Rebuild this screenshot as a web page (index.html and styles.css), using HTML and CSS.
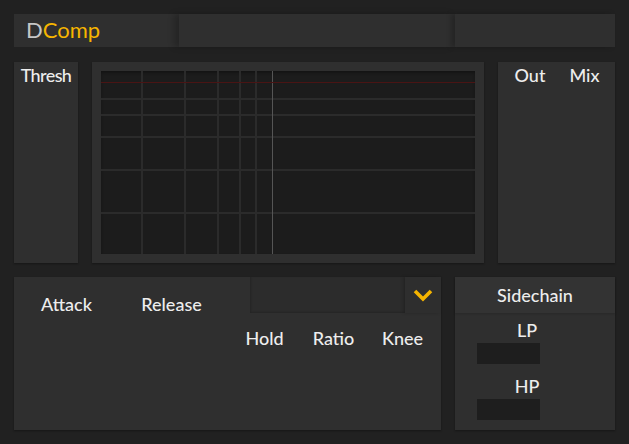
FILE: index.html
```html
<!DOCTYPE html>
<html>
<head>
<meta charset="utf-8">
<link rel="stylesheet" href="styles.css">
</head>
<body>
<div class="app">
  <header class="topbar">
    <div class="seg seg-title"><span class="logo-d">D</span><span class="logo-comp">Comp</span></div>
    <div class="seg seg-mid"></div>
    <div class="seg seg-right"></div>
  </header>

  <section class="middle">
    <div class="panel thresh"><span class="label label-tight">Thresh</span></div>
    <div class="panel graph">
      <div class="graph-inner">
        <svg class="grid" width="374" height="183" viewBox="0 0 374 183">
          <rect x="0" y="27" width="374" height="2" fill="#2b2b2b"/>
          <rect x="0" y="43" width="374" height="2" fill="#2b2b2b"/>
          <rect x="0" y="65" width="374" height="2" fill="#2b2b2b"/>
          <rect x="0" y="98" width="374" height="2" fill="#2b2b2b"/>
          <rect x="0" y="141" width="374" height="2" fill="#2b2b2b"/>
          <rect x="40" y="0" width="2" height="183" fill="#2b2b2b"/>
          <rect x="83" y="0" width="2" height="183" fill="#2b2b2b"/>
          <rect x="116" y="0" width="2" height="183" fill="#2b2b2b"/>
          <rect x="138" y="0" width="2" height="183" fill="#2b2b2b"/>
          <rect x="154" y="0" width="2" height="183" fill="#2b2b2b"/>
          <rect x="171" y="0" width="1" height="183" fill="#555555"/>
          <rect x="0" y="11" width="374" height="1" fill="#4a1414"/>
        </svg>
      </div>
    </div>
    <div class="panel outmix">
      <span class="label">Out</span>
      <span class="label">Mix</span>
    </div>
  </section>

  <section class="bottom">
    <div class="panel envelope">
      <div class="env-left">
        <span class="label env-label">Attack</span>
        <span class="label env-label">Release</span>
      </div>
      <div class="env-right">
        <div class="dropdown">
          <div class="dropdown-field"></div>
          <div class="dropdown-btn">
            <svg width="20" height="13" viewBox="0 0 20 13">
              <path d="M2 2 L10 10 L18 2" fill="none" stroke="#f5b400" stroke-width="3.6" stroke-linecap="butt" stroke-linejoin="miter"/>
            </svg>
          </div>
        </div>
        <div class="env-params">
          <span class="label param">Hold</span>
          <span class="label param">Ratio</span>
          <span class="label param">Knee</span>
        </div>
      </div>
    </div>
    <div class="panel sidechain">
      <div class="sc-header"><span class="label">Sidechain</span></div>
      <div class="sc-body">
        <span class="label sc-label">LP</span>
        <div class="sc-box"></div>
        <span class="label sc-label sc-label-hp">HP</span>
        <div class="sc-box"></div>
      </div>
    </div>
  </section>
</div>
</body>
</html>
```
FILE: styles.css
```css
* { box-sizing: border-box; }

html, body {
  margin: 0;
  padding: 0;
  background: #212121;
}

body {
  font-family: Lato, "Liberation Sans", sans-serif;
  color: #ededed;
}

.app {
  width: 629px;
  height: 444px;
  padding: 14px 14px 0 14px;
  display: flex;
  flex-direction: column;
}

.label {
  font-size: 18px;
  line-height: 20px;
  font-weight: 500;
  color: #ededed;
  white-space: nowrap;
}

.label-tight {
  letter-spacing: -0.6px;
}

/* top bar */
.topbar {
  display: flex;
  height: 33px;
}

.seg {
  background: #2f2f2f;
  height: 33px;
}

.seg-title {
  width: 165px;
  padding-left: 12px;
  display: flex;
  align-items: center;
  font-size: 22px;
  line-height: 33px;
  padding-bottom: 2px;
}

.logo-d { color: #c6c6c6; }
.logo-comp { color: #f6b500; }

.seg-mid {
  width: 276px;
  box-shadow: -5px 0 6px rgba(0, 0, 0, 0.22);
  z-index: 1;
}

.seg-right {
  width: 160px;
  box-shadow: -4px 0 5px rgba(0, 0, 0, 0.22);
  z-index: 2;
}

.panel {
  background: #2f2f2f;
  box-shadow: 0 1px 2px rgba(0, 0, 0, 0.35);
}

/* middle row */
.middle {
  display: flex;
  gap: 14px;
  margin-top: 15px;
  height: 201px;
}

.thresh {
  width: 64px;
  padding-top: 3px;
  text-align: center;
}

.graph {
  width: 392px;
  padding: 9px;
}

.graph-inner {
  width: 374px;
  height: 183px;
  background: #1c1c1c;
  box-shadow: inset 0 2px 3px rgba(0, 0, 0, 0.3);
}

.grid { display: block; }

.outmix {
  width: 117px;
  display: grid;
  grid-template-columns: 64px 45px;
  align-content: start;
  padding-top: 3px;
  text-align: center;
}

/* bottom row */
.bottom {
  display: flex;
  gap: 14px;
  margin-top: 14px;
  height: 153px;
}

.envelope {
  width: 427px;
  display: flex;
}

.env-left {
  display: flex;
  width: 210px;
  padding-top: 17px;
  align-items: flex-start;
}

.env-label {
  width: 105px;
  text-align: center;
}

.env-right {
  flex: 1;
  display: flex;
  flex-direction: column;
}

.dropdown {
  display: flex;
  margin-left: 26px;
  height: 36px;
}

.dropdown-field {
  flex: 1;
  background: #2c2c2c;
  box-shadow: inset 1px -1px 2px rgba(0, 0, 0, 0.18);
}

.dropdown-btn {
  width: 36px;
  display: flex;
  align-items: center;
  justify-content: center;
  background: #2e2e2e;
  box-shadow: -2px 0 3px rgba(0, 0, 0, 0.18);
}

.env-params {
  display: flex;
  padding-left: 6px;
  margin-top: 15px;
}

.param {
  width: 69px;
  text-align: center;
}

.sidechain {
  width: 160px;
  display: flex;
  flex-direction: column;
}

.sc-header {
  height: 36px;
  background: #333333;
  text-align: center;
  padding-top: 8px;
  box-shadow: 0 1px 2px rgba(0, 0, 0, 0.15);
}

.sc-body {
  display: flex;
  flex-direction: column;
  align-items: flex-start;
  padding-left: 22px;
  padding-top: 7px;
}

.sc-label {
  width: 100px;
  text-align: center;
}

.sc-label-hp {
  margin-top: 12px;
}

.sc-box {
  width: 63px;
  height: 21px;
  margin-top: 3px;
  background: #1e1e1e;
}
```
